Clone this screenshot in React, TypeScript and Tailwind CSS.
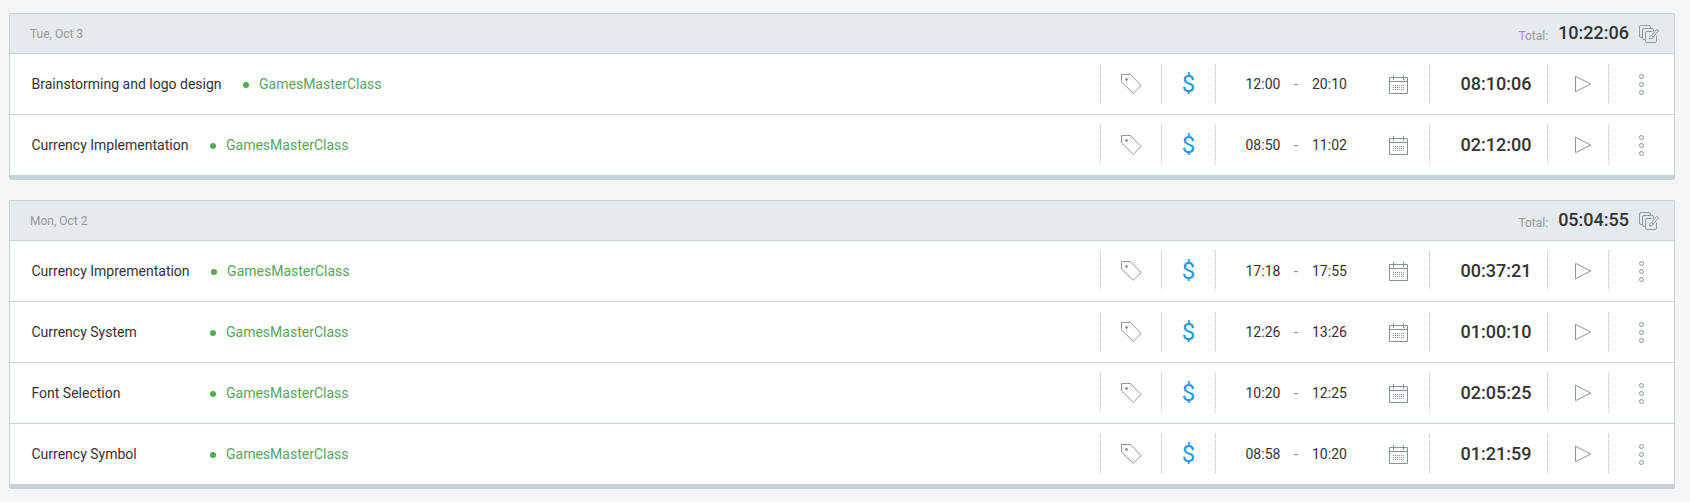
type Entry = {
  title: string;
  start: string;
  end: string;
  duration: string;
};

type Day = {
  date: string;
  total: string;
  entries: Entry[];
};

const days: Day[] = [
  {
    date: "Tue, Oct 3",
    total: "10:22:06",
    entries: [
      { title: "Brainstorming and logo design", start: "12:00", end: "20:10", duration: "08:10:06" },
      { title: "Currency Implementation", start: "08:50", end: "11:02", duration: "02:12:00" },
    ],
  },
  {
    date: "Mon, Oct 2",
    total: "05:04:55",
    entries: [
      { title: "Currency Imprementation", start: "17:18", end: "17:55", duration: "00:37:21" },
      { title: "Currency System", start: "12:26", end: "13:26", duration: "01:00:10" },
      { title: "Font Selection", start: "10:20", end: "12:25", duration: "02:05:25" },
      { title: "Currency Symbol", start: "08:58", end: "10:20", duration: "01:21:59" },
    ],
  },
];

function BulkEditIcon() {
  return (
    <svg width="20" height="20" viewBox="0 0 20 20" fill="none" stroke="#8f9ba2" strokeWidth="1">
      <path d="M3.5 12.5H2A1.5 1.5 0 0 1 .5 11V2A1.5 1.5 0 0 1 2 .5h8A1.5 1.5 0 0 1 11.5 2v1.500" />
      <path d="M6.500 14.500H5A1.500 1.500 0 0 1 3.500 13V5A1.500 1.500 0 0 1 5 3.500h8A1.500 1.500 0 0 1 14.500 5v1.500" />
      <path d="M13.500 6.500H8A1.500 1.500 0 0 0 6.500 8v8A1.500 1.500 0 0 0 8 17.500h8a1.500 1.500 0 0 0 1.500-1.500v-5.500" />
      <path d="M10.300 13.700c.2-1.700.7-2.700 2.300-3.200l4.600-5.500a1.150 1.150 0 0 1 1.800 1.500l-4.700 5.500c-.4 1.300-1.700 1.900-4 1.700z" />
      <path d="M12.600 10.500l1.700 1.500" />
    </svg>
  );
}

function TagIcon() {
  return (
    <svg width="22" height="22" viewBox="0 0 22 22" fill="none" stroke="#8a969d" strokeWidth="1">
      <path d="M.5 1.500h9L20 12.600l-7.700 7.700L.5 9z" />
      <circle cx="5.500" cy="6.500" r="1.400" fill="#8a969d" stroke="none" />
    </svg>
  );
}

const calendarDots = [0, 2, 4].flatMap((y) => [0, 2, 4, 6, 8, 10].map((x) => ({ x: x + 4, y: y + 10 })));

function CalendarIcon() {
  return (
    <svg className="mt-px" width="19" height="19" viewBox="0 0 19 19" fill="none" stroke="#84929a" strokeWidth="1">
      <path d="M.5 2.500h18v16H.5zM.5 6.500h18M4.500 0v5M14.500 0v5" />
      {calendarDots.map((d) => (
        <rect key={`${d.x}-${d.y}`} x={d.x} y={d.y} width="1" height="1" fill="#84929a" stroke="none" />
      ))}
    </svg>
  );
}

function PlayIcon() {
  return (
    <svg width="17" height="18" viewBox="0 0 17 18" fill="none" stroke="#8a969d" strokeWidth="1">
      <path d="M.5 1.300v15.400L15.700 9z" />
    </svg>
  );
}

function MoreIcon() {
  return (
    <svg width="6" height="22" viewBox="0 0 6 22" fill="none" stroke="#84929a" strokeWidth="1">
      <circle cx="2.500" cy="3.500" r="2" />
      <circle cx="2.500" cy="11.500" r="2" />
      <circle cx="2.500" cy="19.500" r="2" />
    </svg>
  );
}

function Divider() {
  return (
    <span className="h-10 w-px shrink-0 bg-[repeating-linear-gradient(to_bottom,#b4bdc2_0px,#b4bdc2_1px,transparent_1px,transparent_2px)]" />
  );
}

function EntryRow({ entry }: { entry: Entry }) {
  return (
    <div className="flex h-[61px] items-center border-b border-[#c6d2d6] last:h-[60px] last:border-b-0">
      <div className="flex flex-1 items-center pl-[21.5px] text-[14px] leading-5">
        <span className="min-w-[157px] text-[#333333]">{entry.title}</span>
        <span className="mt-0.5 ml-[21.5px] size-1.5 rounded-full bg-[#4caf50]" />
        <span className="ml-[10px] text-[#5aa55d]">GamesMasterClass</span>
      </div>
      <Divider />
      <div className="flex w-[60px] pl-5">
        <TagIcon />
      </div>
      <Divider />
      <div className="flex w-[53px] justify-center text-[24px] leading-7 text-[#1e9be0]">$</div>
      <Divider />
      <div className="flex w-[213px] items-center pl-[29.5px] text-[14px] leading-5 text-[#333333]">
        <span className="w-[48.5px]">{entry.start}</span>
        <span className="w-[18px] text-[#808080]">-</span>
        <span className="w-[77px]">{entry.end}</span>
        <CalendarIcon />
      </div>
      <Divider />
      <div className="w-[117px] pl-[30.5px] text-[18px] leading-6 font-medium text-[#333333]">{entry.duration}</div>
      <Divider />
      <div className="flex w-[60px] pl-[27px]">
        <PlayIcon />
      </div>
      <Divider />
      <div className="flex w-[65px] pl-[30px]">
        <MoreIcon />
      </div>
    </div>
  );
}

function DayCard({ day }: { day: Day }) {
  return (
    <section className="rounded-[2px] border border-b-[5px] border-[#c6d2d6] bg-white">
      <header className="flex h-10 items-center border-b border-[#c6d2d6] bg-[#e4eaee] pr-[15px] pl-5">
        <span className="flex-1 text-[12px] leading-4 text-[#999999]">{day.date}</span>
        <span className="mt-1 text-[12px] leading-4 text-[#999999]">Total:</span>
        <span className="mb-px ml-[10px] text-[18px] leading-6 font-medium text-[#333333]">{day.total}</span>
        <span className="ml-[10px] pt-[3px]">
          <BulkEditIcon />
        </span>
      </header>
      {day.entries.map((entry) => (
        <EntryRow key={entry.title} entry={entry} />
      ))}
    </section>
  );
}

export default function App() {
  return (
    <main className="flex h-[502px] flex-col gap-5 bg-[#f2f6f9] pt-[13px] pr-[15px] pl-[9px] font-[Roboto,sans-serif]">
      {days.map((day) => (
        <DayCard key={day.date} day={day} />
      ))}
    </main>
  );
}
